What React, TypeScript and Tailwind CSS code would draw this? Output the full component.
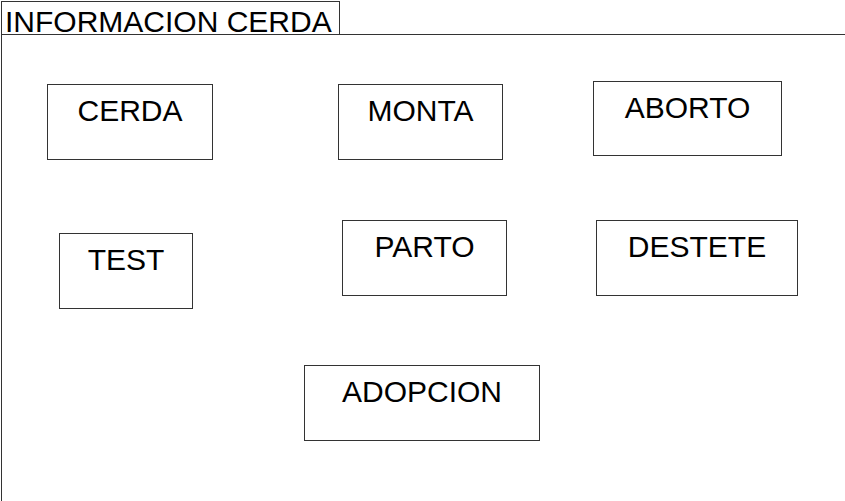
import React from "react";

const Box = ({ label, className }: { label: string; className: string }) => (
  <div
    className={`shrink-0 border border-[#333] bg-white text-center text-[30px] leading-[30px] pt-[11px] text-black ${className}`}
  >
    {label}
  </div>
);

export default function App() {
  return (
    <div
      className="w-[845px] h-[501px] bg-white pt-[1px] pl-[1px] overflow-hidden"
      style={{ fontFamily: '"Liberation Sans", Arial, sans-serif' }}
    >
      <div className="h-full border-l border-[#333] flex flex-col">
        <div className="flex border-b border-[#333] h-[34px]">
          <div className="w-[338px] border-t border-r border-[#333] text-[30px] leading-[30px] pt-[5px] pl-[3px] text-black whitespace-nowrap">
            INFORMACION CERDA
          </div>
        </div>

        <div className="flex items-start mt-[46px]">
          <Box label="CERDA" className="ml-[45px] mt-[3px] w-[166px] h-[76px]" />
          <Box label="MONTA" className="ml-[125px] mt-[3px] w-[165px] h-[76px]" />
          <Box label="ABORTO" className="ml-[90px] w-[189px] h-[75px] pt-[10px]" />
        </div>

        <div className="flex items-start mt-[60px]">
          <Box label="TEST" className="ml-[57px] mt-[13px] w-[134px] h-[76px]" />
          <Box label="PARTO" className="ml-[149px] w-[165px] h-[76px]" />
          <Box label="DESTETE" className="ml-[89px] w-[202px] h-[76px] pt-[9px]" />
        </div>

        <div className="flex items-start mt-[56px]">
          <Box label="ADOPCION" className="ml-[302px] w-[236px] h-[76px]" />
        </div>
      </div>
    </div>
  );
}
